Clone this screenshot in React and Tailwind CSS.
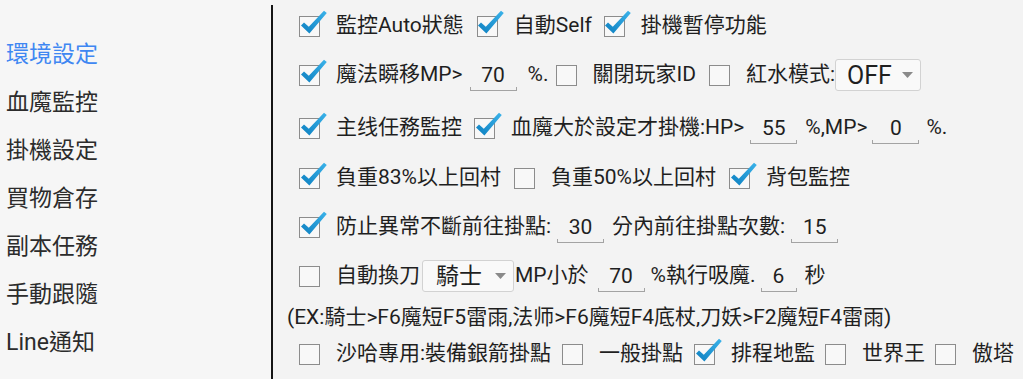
import React from 'react';

const menu = ['環境設定', '血魔監控', '掛機設定', '買物倉存', '副本任務', '手動跟隨', 'Line通知'];

function Box({ checked }) {
    return (
        <span className="relative inline-block h-[21px] w-[21px] shrink-0 border-[1.5px] border-[#8c8c8c] bg-[#f8f8f8]">
            {checked && (
                <svg className="absolute -left-[1.5px] -top-[6.5px] overflow-visible" width="32" height="26" viewBox="0 -5 32 26">
                    <defs>
                        <linearGradient id="ck" x1="0" y1="1" x2="1" y2="0">
                            <stop offset="0" stopColor="#0d7fc0" />
                            <stop offset="1" stopColor="#3bb3ea" />
                        </linearGradient>
                    </defs>
                    <polygon points="2,10.5 5,7.4 9.8,11.8 25,-4.2 27.8,-2 10.4,18.6" fill="url(#ck)" />
                </svg>
            )}
        </span>
    );
}

function Check({ checked, label, className = '' }) {
    return (
        <span className={`flex items-center ${className}`}>
            <Box checked={checked} />
            <span className="ml-[16px] whitespace-nowrap">{label}</span>
        </span>
    );
}

function Field({ value, className = '' }) {
    return (
        <span className={`flex w-[47px] shrink-0 flex-col items-center pt-[4px] ${className}`}>
            <span className="h-[24px] leading-[24px]">{value}</span>
            <span className="h-[4px] w-full border-x border-b border-[#a3a3a3]" />
        </span>
    );
}

function Select({ value, className = '', textClass = '' }) {
    return (
        <span className={`flex h-[32px] items-center justify-between rounded-[3px] border border-[#d2d2d2] bg-[#f9f9f9] ${className}`}>
            <span className={`leading-none ${textClass}`}>{value}</span>
            <svg className="mr-[7px]" width="11" height="6" viewBox="0 0 11 6">
                <polygon points="0,0 11,0 5.5,6" fill="#8a8a8a" />
            </svg>
        </span>
    );
}

export default function App() {
    return (
        <div
            className="flex h-[379px] w-[1023px] overflow-hidden bg-[#f3f3f3] text-[21px] text-[#1f1f1f]"
            style={{ fontFamily: "Roboto, 'Noto Sans CJK TC', sans-serif" }}
        >
            {/* Sidebar */}
            <div className="flex w-[271px] shrink-0 flex-col bg-[#f6f6f6] pl-[6px] pt-[31px]">
                {menu.map((m, i) => (
                    <div key={m} className={`flex h-[48px] items-center text-[23px] ${i === 0 ? 'text-[#3f87f2]' : 'text-[#2c2c2c]'}`}>
                        {m}
                    </div>
                ))}
            </div>

            <div className="mt-[5px] w-[2px] shrink-0 bg-[#151515]" />

            {/* Settings */}
            <div className="flex flex-1 flex-col pl-[14px]">
                <div className="flex h-[52px] items-center pl-[12px]">
                    <Check checked label="監控Auto狀態" />
                    <Check checked label="自動Self" className="ml-[13px]" />
                    <Check checked label="掛機暫停功能" className="ml-[12px]" />
                </div>

                <div className="flex h-[46px] items-center pl-[12px]">
                    <Check checked label="魔法瞬移MP>" />
                    <Field value="70" className="ml-[7px]" />
                    <span className="ml-[11px]">%.</span>
                    <Check label="關閉玩家ID" className="ml-[7px]" />
                    <Check label="紅水模式:" className="ml-[13px]" />
                    <Select value="OFF" className="w-[86px] pl-[11px]" textClass="text-[25px]" />
                </div>

                <div className="flex h-[60px] items-center pl-[12px]">
                    <Check checked label="主线任務監控" />
                    <Check checked label="血魔大於設定才掛機:HP>" className="ml-[12px]" />
                    <Field value="55" className="ml-[6px]" />
                    <span className="ml-[8px]">%,MP&gt;</span>
                    <Field value="0" className="ml-[5px]" />
                    <span className="ml-[7px]">%.</span>
                </div>

                <div className="flex h-[40px] items-center pl-[12px]">
                    <Check checked label="負重83%以上回村" />
                    <Check label="負重50%以上回村" className="ml-[13px]" />
                    <Check checked label="背包監控" className="ml-[13px]" />
                </div>

                <div className="flex h-[58px] items-center pl-[12px]">
                    <Check checked label="防止異常不斷前往掛點:" />
                    <Field value="30" className="ml-[6px]" />
                    <span className="ml-[8px]">分內前往掛點次數:</span>
                    <Field value="15" className="ml-[6px]" />
                </div>

                <div className="flex h-[40px] items-center pl-[12px]">
                    <Check label="自動換刀" />
                    <Select value="騎士" className="ml-[2px] w-[92px] pl-[13px]" textClass="text-[23px]" />
                    <span className="ml-[1px]">MP小於</span>
                    <Field value="70" className="ml-[9px]" />
                    <span className="ml-[6px]">%執行吸魔.</span>
                    <Field value="6" className="ml-[5px] !w-[36px]" />
                    <span className="ml-[8px]">秒</span>
                </div>

                <div className="flex h-[44px] items-center whitespace-nowrap">
                    (EX:騎士&gt;F6魔短F5雷雨,法师&gt;F6魔短F4底杖,刀妖&gt;F2魔短F4雷雨)
                </div>

                <div className="flex h-[28px] items-center pl-[12px]">
                    <Check label="沙哈專用:裝備銀箭掛點" />
                    <Check label="一般掛點" className="ml-[11px]" />
                    <Check checked label="排程地監" className="ml-[11px]" />
                    <Check label="世界王" className="ml-[10px]" />
                    <Check label="傲塔" className="ml-[10px]" />
                </div>
            </div>
        </div>
    );
}
